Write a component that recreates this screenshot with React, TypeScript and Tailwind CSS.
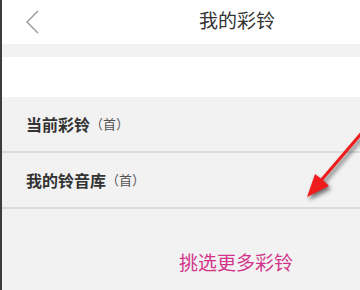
const font = { fontFamily: '"Noto Sans CJK SC", "Noto Sans", sans-serif' };

function Row({ title }: { title: string }) {
  return (
    <div className="flex h-[56px] items-center border-b-2 border-[#dcdcdc] pl-[24px]">
      <span className="text-[16px] font-bold text-[#333]">{title}</span>
      <span className="text-[13px] text-[#555]">（首）</span>
    </div>
  );
}

export default function App() {
  return (
    <div
      className="relative flex h-[290px] w-[360px] flex-col overflow-hidden border-l-2 border-[#3d3d3d] bg-[#f2f2f2]"
      style={font}
    >
      {/* 顶栏 */}
      <div className="relative flex h-[44px] items-center bg-white">
        <svg className="ml-[22px]" width="16" height="26" viewBox="0 0 16 26">
          <polyline points="14,2 3,13 14,24" fill="none" stroke="#999" strokeWidth="1.4" />
        </svg>
        <span className="absolute left-[197px] top-[6px] text-[19px] text-[#333]">我的彩铃</span>
      </div>
      <div className="h-[13px] bg-[#f2f2f2]" />
      <div className="h-[40px] bg-white" />

      <Row title="当前彩铃" />
      <Row title="我的铃音库" />

      <div className="flex flex-1 items-center pl-[177px] pt-[26px]">
        <span className="text-[19px] text-[#d2348a]">挑选更多彩铃</span>
      </div>

      {/* 标注箭头 */}
      <svg
        className="absolute left-0 top-0"
        width="360"
        height="290"
        viewBox="0 0 360 290"
        style={{ filter: 'drop-shadow(2px 3px 2px rgba(0,0,0,0.55))' }}
      >
        <line x1="364" y1="128" x2="316" y2="184" stroke="#ee1c1c" strokeWidth="3" />
        <polygon points="305,197 313,174 322,181 327,186" fill="#ee1c1c" />
      </svg>
    </div>
  );
}
